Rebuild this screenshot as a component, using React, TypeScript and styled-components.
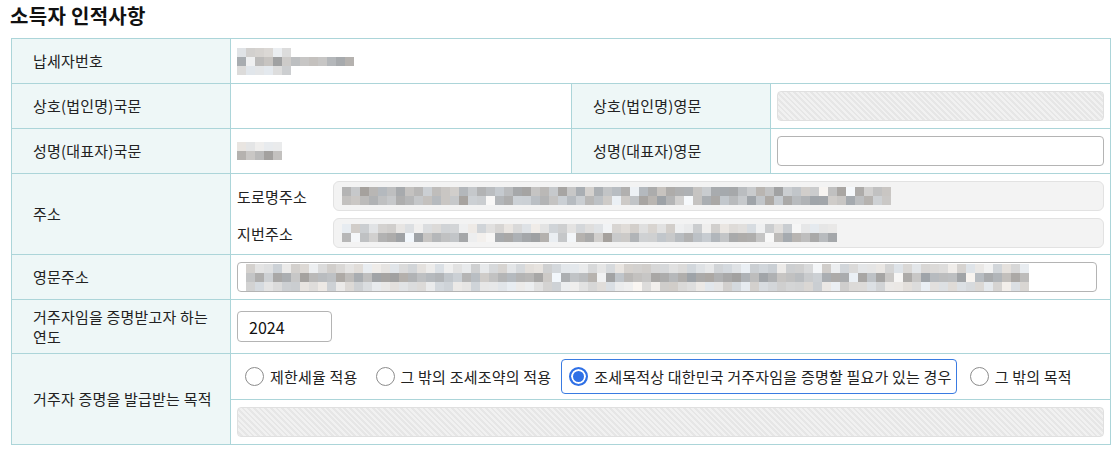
import React from "react";
import styled, { createGlobalStyle, css } from "styled-components";

const GlobalStyle = createGlobalStyle`
  html, body {
    margin: 0;
    padding: 0;
    background: #fff;
  }
  body {
    font-family: "Noto Sans CJK KR", "Noto Sans", sans-serif;
    font-size: 15px;
    letter-spacing: 0.2px;
    color: #222;
  }
`;

const LINE = "#acd5d9";

// pixelated (redacted) text, drawn as a mosaic
const Mosaic = ({ lines, seed, dark = [] as number[] }: { lines: number[]; seed: number; dark?: number[] }) => {
  let s = seed;
  const rnd = () => {
    s = (s * 9301 + 49297) % 233280;
    return s / 233280;
  };
  const cell = 9;
  const w = Math.max(...lines) * cell;
  const rects: React.ReactNode[] = [];
  lines.forEach((count, row) => {
    const isDark = dark.includes(row);
    for (let i = 0; i < count; i++) {
      const r = rnd();
      let g = isDark ? 160 + Math.floor(r * 50) : 205 + Math.floor(r * 35);
      if (rnd() < 0.06) g = 236 + Math.floor(rnd() * 14);
      const tint = Math.floor((rnd() - 0.5) * 10);
      rects.push(
        <rect key={row + "-" + i} x={i * cell} y={row * cell} width={cell} height={cell}
          fill={`rgb(${g + tint},${g},${g - tint})`} />
      );
    }
  });
  return (
    <svg width={w} height={lines.length * cell} shapeRendering="crispEdges">
      {rects}
    </svg>
  );
};

const Page = styled.div`
  width: 1119px;
  box-sizing: border-box;
  padding: 4px 0 0 11px;
`;

const Title = styled.h2`
  margin: 0 0 10px -1px;
  font-size: 20px;
  line-height: 24px;
  font-weight: 600;
  letter-spacing: 0.3px;
  color: #111;
`;

const Table = styled.div`
  width: 1100px;
  box-sizing: border-box;
  border: 1px solid ${LINE};
  border-bottom: none;
`;

const Row = styled.div<{ $h: number }>`
  display: flex;
  height: ${(p) => p.$h}px;
  box-sizing: border-box;
  border-bottom: 1px solid ${LINE};
`;

const Label = styled.div<{ $w?: number }>`
  width: ${(p) => p.$w ?? 219}px;
  flex-shrink: 0;
  box-sizing: border-box;
  display: flex;
  align-items: center;
  padding: 0 12px 0 21px;
  background: #eef7f7;
  border-right: 1px solid ${LINE};
  line-height: 20px;
  word-break: keep-all;
`;

const Cell = styled.div<{ $w?: number; $split?: boolean }>`
  ${(p) => (p.$w ? css`width: ${p.$w}px; flex-shrink: 0;` : css`flex: 1;`)}
  box-sizing: border-box;
  display: flex;
  align-items: center;
  padding: 0 6px;
  ${(p) => p.$split && css`border-right: 1px solid ${LINE};`}
`;

const Stack = styled.div`
  flex: 1;
  display: flex;
  flex-direction: column;
  gap: 7px;
  padding: 7px 6px 6px;
`;

const AddrLine = styled.div`
  display: flex;
  align-items: center;
`;

const AddrLabel = styled.span`
  width: 96px;
  flex-shrink: 0;
`;

const Field = styled.div<{ $kind: "plain" | "readonly" | "disabled"; $w?: number; $pad?: number }>`
  height: 30px;
  box-sizing: border-box;
  display: flex;
  align-items: center;
  padding-left: ${(p) => p.$pad ?? 8}px;
  overflow: hidden;
  ${(p) => (p.$w ? css`width: ${p.$w}px;` : css`flex: 1;`)}
  ${(p) =>
    p.$kind === "plain" &&
    css`
      background: #fff;
      border: 1px solid #b4b4b4;
      border-radius: 4px;
    `}
  ${(p) =>
    p.$kind === "readonly" &&
    css`
      background: #f3f3f3;
      border: 1px solid #e2e2e2;
      border-radius: 6px;
    `}
  ${(p) =>
    p.$kind === "disabled" &&
    css`
      border: 1px solid #e0e0e0;
      border-radius: 4px;
      background: repeating-linear-gradient(45deg, #f1f1f1 0 2px, #e6e6e6 2px 4px);
    `}
`;

const YearInput = styled.input`
  width: 95px;
  height: 31px;
  box-sizing: border-box;
  border: 1px solid #b4b4b4;
  border-radius: 4px;
  padding: 0 0 0 11px;
  font-family: inherit;
  font-size: 16px;
  color: #111;
  outline: none;
`;

const PurposeCell = styled.div`
  flex: 1;
  display: flex;
  flex-direction: column;
`;

const RadioRow = styled.div`
  height: 46px;
  box-sizing: border-box;
  border-bottom: 1px solid ${LINE};
  display: flex;
  align-items: center;
  gap: 5px;
  padding: 0 6px;
`;

const RadioItem = styled.label<{ $active?: boolean }>`
  display: inline-flex;
  align-items: center;
  height: 35px;
  box-sizing: border-box;
  padding: 0 4px 0 7px;
  border: 1px solid ${(p) => (p.$active ? "#3a7be2" : "transparent")};
  border-radius: 4px;
  white-space: nowrap;
  color: #222;
`;

const RadioDot = styled.span<{ $checked?: boolean }>`
  width: 19px;
  height: 19px;
  flex-shrink: 0;
  box-sizing: border-box;
  border-radius: 50%;
  margin-right: 6px;
  border: 1px solid #8c8c8c;
  background: #fff;
  ${(p) =>
    p.$checked &&
    css`
      border: 2px solid #2f70e6;
      box-shadow: inset 0 0 0 2px #fff;
      background: #2f70e6;
    `}
`;

const TextRow = styled.div`
  flex: 1;
  display: flex;
  align-items: center;
  padding: 0 6px 1px;
`;

const purposes = [
  "제한세율 적용",
  "그 밖의 조세조약의 적용",
  "조세목적상 대한민국 거주자임을 증명할 필요가 있는 경우",
  "그 밖의 목적",
];

export default function App() {
  return (
    <Page>
      <GlobalStyle />
      <Title>소득자 인적사항</Title>
      <Table>
        <Row $h={45}>
          <Label>납세자번호</Label>
          <Cell>
            <Mosaic lines={[6, 13, 6]} seed={11} dark={[1]} />
          </Cell>
        </Row>
        <Row $h={45}>
          <Label>상호(법인명)국문</Label>
          <Cell $w={341} $split />
          <Label $w={199}>상호(법인명)영문</Label>
          <Cell>
            <Field $kind="disabled" />
          </Cell>
        </Row>
        <Row $h={45}>
          <Label>성명(대표자)국문</Label>
          <Cell $w={341} $split>
            <Mosaic lines={[5, 5]} seed={37} dark={[1]} />
          </Cell>
          <Label $w={199}>성명(대표자)영문</Label>
          <Cell>
            <Field $kind="plain" />
          </Cell>
        </Row>
        <Row $h={81}>
          <Label>주소</Label>
          <Stack>
            <AddrLine>
              <AddrLabel>도로명주소</AddrLabel>
              <Field $kind="readonly">
                <Mosaic lines={[61, 61]} seed={5} dark={[0, 1]} />
              </Field>
            </AddrLine>
            <AddrLine>
              <AddrLabel>지번주소</AddrLabel>
              <Field $kind="readonly">
                <Mosaic lines={[55, 55]} seed={71} dark={[1]} />
              </Field>
            </AddrLine>
          </Stack>
        </Row>
        <Row $h={45}>
          <Label>영문주소</Label>
          <Cell>
            <Field $kind="plain" $w={860}>
              <Mosaic lines={[87, 87, 87]} seed={23} dark={[1]} />
            </Field>
          </Cell>
        </Row>
        <Row $h={54}>
          <Label>거주자임을 증명받고자 하는 연도</Label>
          <Cell>
            <YearInput defaultValue="2024" readOnly />
          </Cell>
        </Row>
        <Row $h={91}>
          <Label>거주자 증명을 발급받는 목적</Label>
          <PurposeCell>
            <RadioRow>
              {purposes.map((p, i) => (
                <RadioItem key={p} $active={i === 2}>
                  <RadioDot $checked={i === 2} />
                  {p}
                </RadioItem>
              ))}
            </RadioRow>
            <TextRow>
              <Field $kind="disabled" />
            </TextRow>
          </PurposeCell>
        </Row>
      </Table>
    </Page>
  );
}
